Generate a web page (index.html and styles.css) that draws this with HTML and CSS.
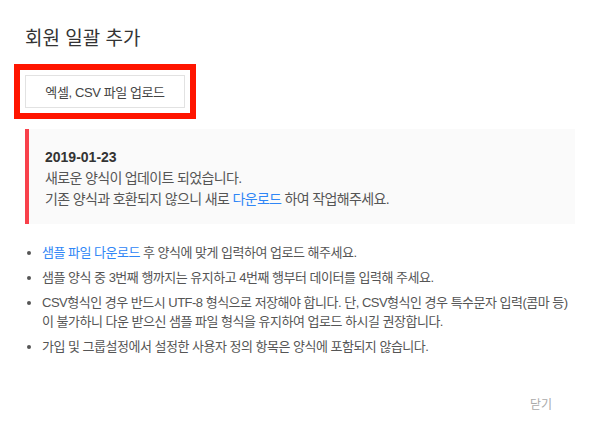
FILE: index.html
```html
<!DOCTYPE html>
<html lang="ko">
<head>
    <meta charset="UTF-8">
    <meta name="viewport" content="width=device-width, initial-scale=1.0">
    <title>회원 일괄 추가</title>
    <link rel="stylesheet" href="styles.css">
</head>
<body>

    <div class="modal">
        <h2 class="modal-title">회원 일괄 추가</h2>

        <div class="upload-row">
            <button class="upload-btn">엑셀, CSV 파일 업로드</button>
        </div>

        <div class="notice">
            <div class="notice-date">2019-01-23</div>
            <p>새로운 양식이 업데이트 되었습니다.</p>
            <p>기존 양식과 호환되지 않으니 새로 <a href="#">다운로드</a> 하여 작업해주세요.</p>
        </div>

        <ul class="guide">
            <li><a href="#">샘플 파일 다운로드</a> 후 양식에 맞게 입력하여 업로드 해주세요.</li>
            <li>샘플 양식 중 3번째 행까지는 유지하고 4번째 행부터 데이터를 입력해 주세요.</li>
            <li>CSV형식인 경우 반드시 UTF-8 형식으로 저장해야 합니다. 단, CSV형식인 경우 특수문자 입력(콤마 등)<br>이 불가하니 다운 받으신 샘플 파일 형식을 유지하여 업로드 하시길 권장합니다.</li>
            <li>가입 및 그룹설정에서 설정한 사용자 정의 항목은 양식에 포함되지 않습니다.</li>
        </ul>

        <div class="modal-footer">
            <button class="close-btn">닫기</button>
        </div>
    </div>

</body>
</html>
```

FILE: styles.css
```css
body {
    margin: 0;
    background-color: #fff;
    font-family: "Liberation Sans", "Noto Sans CJK KR", sans-serif;
    color: #555;
}

.modal {
    padding: 26px 25px 0;
}

.modal-title {
    margin: 0;
    font-size: 19px;
    line-height: 26px;
    font-weight: normal;
    color: #333;
    letter-spacing: 0;
}

.upload-row {
    display: flex;
    margin-top: 23px;
}

/* 빨간 강조 박스 */
.upload-btn {
    width: 160px;
    height: 33px;
    padding: 0;
    background: #fff;
    border: 1px solid #e2e2e2;
    border-radius: 0;
    font-family: inherit;
    font-size: 13px;
    color: #444;
    letter-spacing: -0.4px;
    outline: 6px solid #ff1500;
    outline-offset: 5px;
    cursor: pointer;
}

.notice {
    margin-top: 21px;
    padding: 18px 20px 14px 16px;
    background-color: #fafafa;
    border-left: 4px solid #f8414b;
    font-size: 14px;
    line-height: 21px;
    letter-spacing: -0.65px;
}

.notice-date {
    font-weight: bold;
    color: #333;
    font-size: 14px;
    letter-spacing: 0;
}

.notice p {
    margin: 0;
}

a {
    color: #2f86f6;
    text-decoration: none;
}

.guide {
    margin: 19px 0 0;
    padding-left: 17px;
    font-size: 13px;
    line-height: 19px;
    letter-spacing: -0.5px;
    color: #555;
}

.guide li {
    margin-bottom: 6px;
}

.modal-footer {
    display: flex;
    justify-content: flex-end;
    margin-top: 34px;
}

.close-btn {
    padding: 6px 23px;
    background: none;
    border: none;
    font-family: inherit;
    font-size: 12px;
    line-height: 18px;
    color: #aaa;
    cursor: pointer;
}
```
